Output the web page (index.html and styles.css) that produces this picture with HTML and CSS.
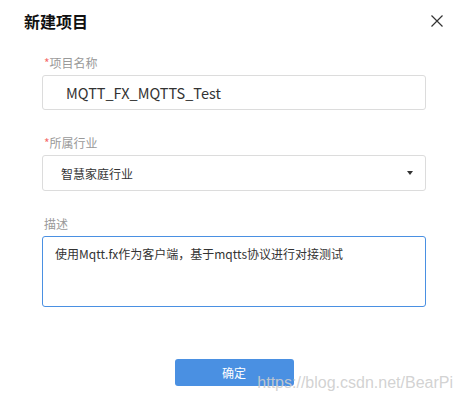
FILE: index.html
```html
<!DOCTYPE html>
<html lang="zh-CN">
<head>
  <meta charset="UTF-8" />
  <meta name="viewport" content="width=device-width, initial-scale=1.0">
  <title>新建项目</title>
  <link rel="stylesheet" href="styles.css">
</head>
<body>
  <div class="dialog">
    <div class="dialog-header">
      <div class="dialog-title">新建项目</div>
      <svg class="close" width="12" height="12" viewBox="0 0 12 12">
        <path d="M0.5 0.5 L11.5 11.5 M11.5 0.5 L0.5 11.5" stroke="#333" stroke-width="1.2" fill="none" />
      </svg>
    </div>

    <div class="form">
      <div class="field">
        <div class="label"><span class="req">*</span>项目名称</div>
        <div class="control input-name">MQTT_FX_MQTTS_Test</div>
      </div>

      <div class="field">
        <div class="label"><span class="req">*</span>所属行业</div>
        <div class="control select">
          <span>智慧家庭行业</span>
          <span class="caret"></span>
        </div>
      </div>

      <div class="field">
        <div class="label">描述</div>
        <div class="control textarea">使用Mqtt.fx作为客户端，基于mqtts协议进行对接测试</div>
      </div>

      <div class="actions">
        <button class="btn-primary">确定</button>
      </div>
    </div>
  </div>

  <div class="watermark">https://blog.csdn.net/BearPi</div>
</body>
</html>
```

FILE: styles.css
```css
html, body {
  margin: 0;
  padding: 0;
  background-color: #fff;
  font-family: "Noto Sans CJK SC", "Noto Sans", sans-serif;
  color: #333;
}

.dialog {
  width: 463px;
  height: 403px;
  box-sizing: border-box;
}

.dialog-header {
  display: flex;
  justify-content: space-between;
  align-items: center;
  padding: 10px 20px 0 24px;
}

.dialog-title {
  font-size: 16px;
  line-height: 22px;
  font-weight: bold;
  color: #111;
}

.close {
  display: block;
}

.form {
  padding: 23px 37px 0 42px;
}

.field {
  margin-bottom: 25px;
}

.label {
  font-size: 12px;
  line-height: 16px;
  color: #999;
  margin-bottom: 4px;
  padding-left: 2px;
}

.req {
  color: #f56c6c;
}

.control {
  border: 1px solid #dcdcdc;
  border-radius: 3px;
  box-sizing: border-box;
  color: #333;
}

.input-name {
  height: 35px;
  line-height: 33px;
  padding-left: 23px;
  font-size: 14.5px;
}

.select {
  height: 36px;
  display: flex;
  justify-content: space-between;
  align-items: center;
  padding: 0 12px 0 18px;
  font-size: 12px;
}

.caret {
  width: 0;
  height: 0;
  border-left: 3.5px solid transparent;
  border-right: 3.5px solid transparent;
  border-top: 4px solid #333;
}

.textarea {
  height: 71px;
  border-color: #4a90e2;
  padding: 7px 12px;
  font-size: 12px;
  line-height: 20px;
}

.actions {
  display: flex;
  justify-content: center;
  padding-top: 27px;
}

.btn-primary {
  width: 119px;
  height: 27px;
  border: none;
  border-radius: 3px;
  background-color: #4a90e2;
  color: #fff;
  font-family: "Noto Sans CJK SC", sans-serif;
  font-size: 12px;
  padding: 0;
}

.watermark {
  position: absolute;
  right: 10px;
  bottom: 11px;
  font-family: "Liberation Sans", Arial, sans-serif;
  font-size: 16px;
  line-height: 18px;
  color: rgba(205, 205, 205, 0.9);
}
```
